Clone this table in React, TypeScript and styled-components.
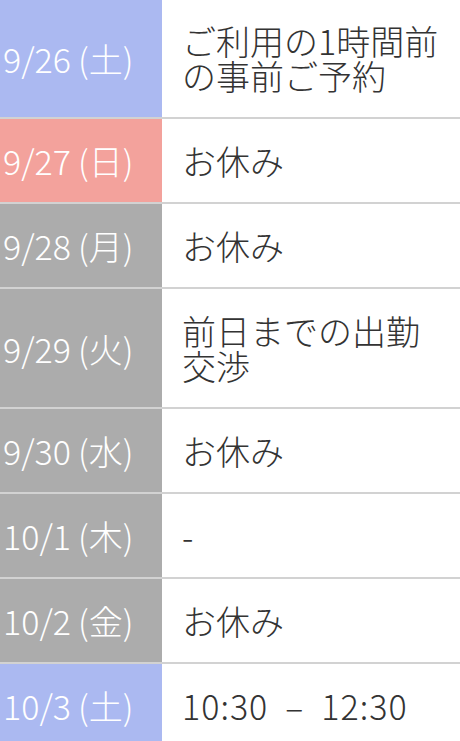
import React from "react";
import styled, { createGlobalStyle } from "styled-components";

const GlobalStyle = createGlobalStyle`
  html, body {
    margin: 0;
    padding: 0;
    background: #ffffff;
  }
  body {
    font-family: "Noto Sans CJK JP", "Noto Sans", sans-serif;
  }
`;

type Kind = "sat" | "sun" | "weekday";

const bg: Record<Kind, string> = {
  sat: "#abb9f1",
  sun: "#f3a29c",
  weekday: "#acacac",
};

const Table = styled.div`
  display: flex;
  flex-direction: column;
  width: 460px;
  margin-top: -1px;
`;

const Row = styled.div`
  display: grid;
  grid-template-columns: 162px 1fr;
  border-bottom: 2px solid #d2d2d2;
`;

const DateCell = styled.div<{ $kind: Kind }>`
  display: flex;
  align-items: center;
  padding-left: 3px;
  background: ${(p) => bg[p.$kind]};
  color: #ffffff;
  font-family: "Noto Sans CJK JP", sans-serif;
  font-weight: 300;
  font-size: 34px;
  white-space: nowrap;
`;

const Paren = styled.span`
  margin-left: 7px;
`;

const Content = styled.div`
  padding: 24px 20px 24px 20px;
  font-family: "Noto Sans CJK JP", sans-serif;
  font-weight: 300;
  font-size: 34px;
  line-height: 35px;
  color: #333333;
  display: flex;
  align-items: center;
`;

const Time = styled.span`
  white-space: pre;
  letter-spacing: 1px;
`;

const rows: { date: string; day: string; kind: Kind; text: React.ReactNode }[] = [
  { date: "9/26", day: "(土)", kind: "sat", text: "ご利用の1時間前の事前ご予約" },
  { date: "9/27", day: "(日)", kind: "sun", text: "お休み" },
  { date: "9/28", day: "(月)", kind: "weekday", text: "お休み" },
  { date: "9/29", day: "(火)", kind: "weekday", text: "前日までの出勤交渉" },
  { date: "9/30", day: "(水)", kind: "weekday", text: "お休み" },
  { date: "10/1", day: "(木)", kind: "weekday", text: "-" },
  { date: "10/2", day: "(金)", kind: "weekday", text: "お休み" },
  { date: "10/3", day: "(土)", kind: "sat", text: <Time>{"10:30  –  12:30"}</Time> },
];

export default function App() {
  return (
    <>
      <GlobalStyle />
      <Table>
        {rows.map((r) => (
          <Row key={r.date}>
            <DateCell $kind={r.kind}>
              {r.date}
              <Paren>{r.day}</Paren>
            </DateCell>
            <Content>{r.text}</Content>
          </Row>
        ))}
      </Table>
    </>
  );
}
